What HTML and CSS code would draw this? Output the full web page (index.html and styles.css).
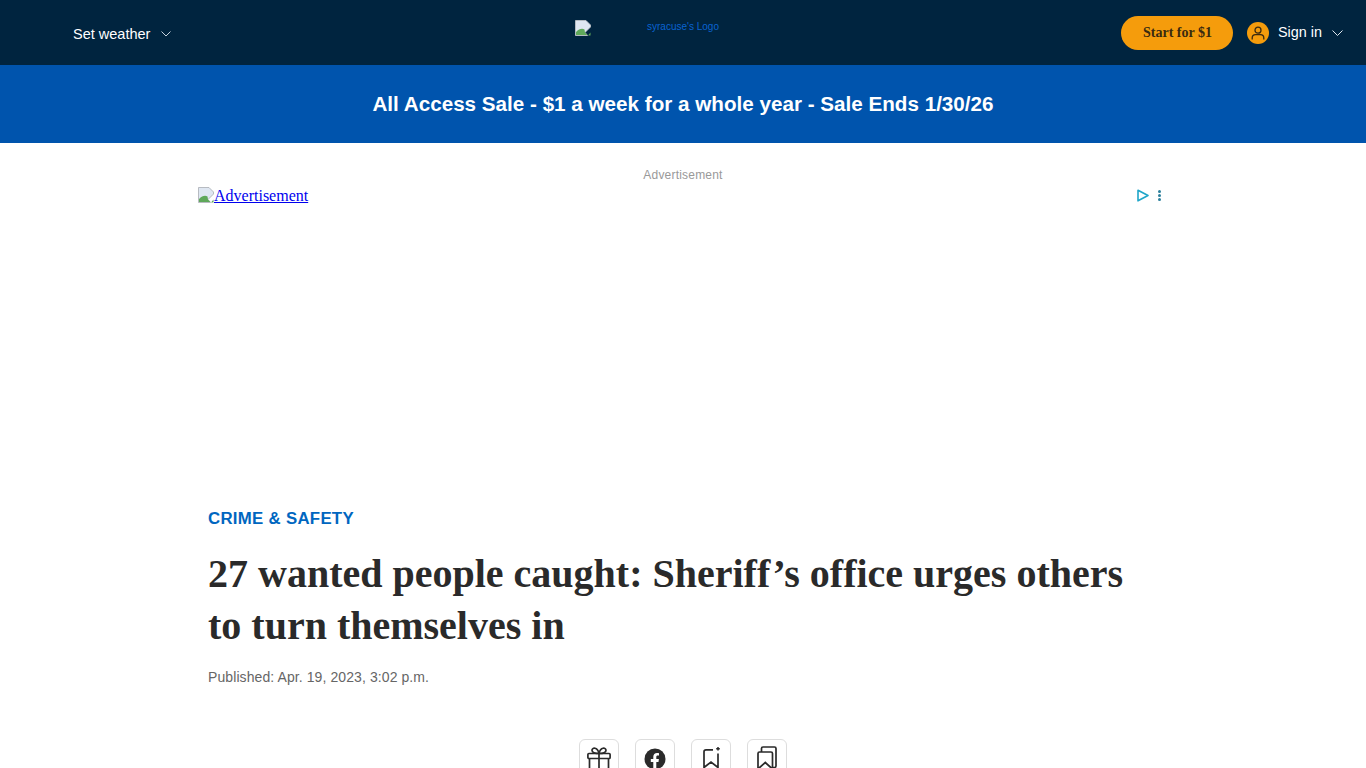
FILE: index.html
```html
<!DOCTYPE html>
<html lang="en">
<head>
    <meta charset="UTF-8">
    <meta name="viewport" content="width=device-width, initial-scale=1.0">
    <title>27 wanted people caught: Sheriff's office urges others to turn themselves in</title>
    <link rel="stylesheet" href="styles.css">
</head>
<body>
    <header class="top-bar">
        <button class="weather">
            <span>Set weather</span>
            <svg class="chevron" width="10" height="6" viewBox="0 0 10 6"><path d="M0.5 0.5 5 5 9.5 0.5" fill="none" stroke="currentColor"/></svg>
        </button>
        <a class="logo" href="#">
            <svg class="broken-img" width="16" height="16" viewBox="0 0 16 16">
                <path d="M0.500 0.500H11L15.500 5V7L10 12.500L12.500 15.500H0.500Z" fill="#dfe7f2" stroke="#c4c8cc" stroke-width="0.8"/>
                <path d="M1 15V12C4 9 7 8 9.500 9.500L10 12.500L12.500 15Z" fill="#5fa85a"/>
                <path d="M13 15.500 15.500 12.500V15.500Z" fill="#5fa85a"/>
            </svg>
            <span class="logo-alt">syracuse's Logo</span>
        </a>
        <div class="account">
            <a class="start-btn" href="#">Start for $1</a>
            <span class="avatar">
                <svg width="14" height="14" viewBox="0 0 14 14" fill="none" stroke="#3a2a10" stroke-width="1.3">
                    <circle cx="7" cy="4.2" r="3"/>
                    <path d="M1.2 13.5V12C1.2 9.8 3 8.600 4.600 8.600H9.400C11 8.600 12.800 9.800 12.800 12V13.500"/>
                </svg>
            </span>
            <span class="sign-in">Sign in</span>
            <svg class="chevron" width="11" height="7" viewBox="0 0 11 7"><path d="M0.5 0.5 5.5 5.5 10.5 0.5" fill="none" stroke="currentColor"/></svg>
        </div>
    </header>

    <div class="sale-banner">All Access Sale - $1 a week for a whole year - Sale Ends 1/30/26</div>

    <section class="ad-slot">
        <div class="ad-label">Advertisement</div>
        <div class="ad-box">
            <a class="ad-link" href="#">
                <svg class="broken-img" width="16" height="16" viewBox="0 0 16 16">
                    <path d="M0.500 0.500H11L15.500 5V7L10 12.500L12.500 15.500H0.500Z" fill="#dfe7f2" stroke="#a8acb2" stroke-width="0.8"/>
                    <path d="M1 15V12C4 9 7 8 9.500 9.500L10 12.500L12.500 15Z" fill="#5fa85a"/>
                    <path d="M13 15.500 15.500 12.500V15.500Z" fill="#5fa85a"/>
                </svg>Advertisement</a>
            <div class="ad-choices">
                <svg width="12" height="13" viewBox="0 0 12 13"><path d="M1 1.2 11 6.5 1 11.8Z" fill="none" stroke="#1fa6c9" stroke-width="1.6" stroke-linejoin="round"/></svg>
                <svg width="3" height="11" viewBox="0 0 3 11" fill="#2b7f9c"><circle cx="1.5" cy="1.5" r="1.5"/><circle cx="1.5" cy="5.5" r="1.5"/><circle cx="1.5" cy="9.5" r="1.5"/></svg>
            </div>
        </div>
    </section>

    <article class="article">
        <a class="category" href="#">CRIME &amp; SAFETY</a>
        <h1>27 wanted people caught: Sheriff’s office urges others to turn themselves in</h1>
        <div class="published">Published: Apr. 19, 2023, 3:02 p.m.</div>
        <div class="share-row">
            <button class="share-btn" aria-label="Gift">
                <svg width="24" height="24" viewBox="0 0 24 24" fill="none" stroke="#2a2a2a" stroke-width="1.700">
                    <rect x="0.900" y="6.500" width="22.200" height="5" rx="1"/>
                    <path d="M2.500 11.500V25H21.500V11.500M12 6.500V25"/>
                    <path d="M12 6.500C8 6.500 5 5.500 5 3.200C5 0.500 10.500 -0.500 12 6.500C13.500 -0.500 19 0.500 19 3.200C19 5.500 16 6.500 12 6.500Z"/>
                </svg>
            </button>
            <button class="share-btn" aria-label="Facebook">
                <svg width="22" height="22" viewBox="0 0 22 22">
                    <circle cx="11" cy="11" r="10.500" fill="#2a2a2a"/>
                    <path d="M9.300 21.500V14H6.800V11H9.300V8.800C9.300 6.300 10.800 5 13 5C14 5 15 5.200 15 5.200V7.600H13.800C12.600 7.600 12.300 8.300 12.300 9.100V11H14.900L14.500 14H12.300V21.500Z" fill="#fff"/>
                </svg>
            </button>
            <button class="share-btn" aria-label="Save">
                <svg width="24" height="24" viewBox="0 0 24 24" fill="none" stroke="#2a2a2a" stroke-width="1.700">
                    <path d="M14 2.800H7C5.900 2.800 5 3.700 5 4.800V20.500L12 15L19 20.500V6.500"/>
                    <path d="M19 0V3.600M17.200 1.800H20.800" stroke-width="1.500"/>
                </svg>
            </button>
            <button class="share-btn" aria-label="Saved stories">
                <svg width="24" height="24" viewBox="0 0 24 24" fill="none" stroke="#2a2a2a" stroke-width="1.700">
                    <path d="M6.500 5V1.500C6.500 0.700 7.200 0 8 0H19.500C20.300 0 21 0.700 21 1.500V19C21 19.800 20.300 20.500 19.500 20.500H17.500"/>
                    <path d="M4.500 5H16C16.800 5 17.500 5.700 17.500 6.500V22L10.300 15.500L3 22V6.500C3 5.700 3.700 5 4.500 5Z"/>
                </svg>
            </button>
        </div>
    </article>
</body>
</html>
```

FILE: styles.css
```css
html, body {
    margin: 0;
    padding: 0;
    overflow-x: hidden;
}

body {
    font-family: "Liberation Sans", Arial, sans-serif;
    background-color: #fff;
    color: #2a2a2a;
}

.top-bar {
    display: flex;
    align-items: center;
    justify-content: space-between;
    position: relative;
    height: 65px;
    padding: 0 23px 0 73px;
    background-color: #00243f;
    color: #fff;
}

.weather {
    display: flex;
    align-items: center;
    gap: 11px;
    margin-top: 2px;
    padding: 0;
    border: none;
    background: none;
    color: #fff;
    font-family: inherit;
    font-size: 14.5px;
}

.weather .chevron {
    color: #c6d3de;
}

.logo {
    position: absolute;
    left: 575px;
    top: 20px;
    display: flex;
    width: 144px;
    text-decoration: none;
}

.logo-alt {
    margin-left: 56px;
    font-size: 10px;
    line-height: 14px;
    color: #0a63d0;
}

.account {
    display: flex;
    align-items: center;
}

.start-btn {
    box-sizing: border-box;
    width: 112px;
    height: 34px;
    margin-top: 1px;
    padding-left: 1px;
    border-radius: 17px;
    background-color: #f59c0c;
    color: #3a2a10;
    font-family: "Liberation Serif", "Times New Roman", serif;
    font-size: 14px;
    font-weight: bold;
    line-height: 34px;
    text-align: center;
    text-decoration: none;
}

.avatar {
    display: flex;
    align-items: center;
    justify-content: center;
    width: 22px;
    height: 22px;
    margin-left: 14px;
    border-radius: 50%;
    background-color: #f59c0c;
}

.sign-in {
    margin-left: 9px;
    margin-bottom: 2px;
    font-size: 14.4px;
}

.account .chevron {
    margin-top: 2px;
    margin-left: 10px;
    color: #dfe7ee;
}

.sale-banner {
    height: 78px;
    background-color: #0054ad;
    color: #fff;
    font-size: 20.65px;
    font-weight: bold;
    line-height: 78px;
    text-align: center;
}

.ad-slot {
    height: 338px;
    padding-top: 25px;
    box-sizing: border-box;
}

.ad-label {
    color: #999;
    font-size: 12px;
    letter-spacing: 0.2px;
    line-height: 14px;
    text-align: center;
}

.ad-box {
    display: flex;
    justify-content: space-between;
    width: 970px;
    height: 249px;
    margin: 5px auto 0;
}

.ad-link {
    height: 18px;
    color: #00e;
    font-family: "Liberation Serif", "Times New Roman", serif;
    font-size: 16px;
    line-height: 18px;
}

.ad-link .broken-img {
    vertical-align: -2px;
}

.ad-choices {
    display: flex;
    align-items: center;
    gap: 9px;
    height: 16px;
    padding-right: 7px;
}

.article {
    width: 950px;
    margin: 0 auto;
    padding-top: 28px;
}

.category {
    display: block;
    margin-top: 1px;
    color: #0066c0;
    font-size: 16.8px;
    font-weight: bold;
    letter-spacing: 0.3px;
    line-height: 18px;
    text-decoration: none;
}

.article h1 {
    margin: 20px 0 0;
    font-family: "Liberation Serif", "Times New Roman", serif;
    font-size: 40px;
    font-weight: bold;
    line-height: 52px;
    color: #2a2a2a;
}

.published {
    margin-top: 16px;
    color: #666;
    font-size: 14px;
    letter-spacing: 0.09px;
    line-height: 18px;
}

.share-row {
    display: flex;
    justify-content: center;
    gap: 16px;
    margin-top: 53px;
}

.share-btn {
    display: flex;
    align-items: center;
    justify-content: center;
    width: 40px;
    height: 40px;
    padding: 0;
    border: 1px solid #ddd;
    border-radius: 6px;
    background: #fff;
}

.share-btn svg {
    overflow: visible;
}
```
